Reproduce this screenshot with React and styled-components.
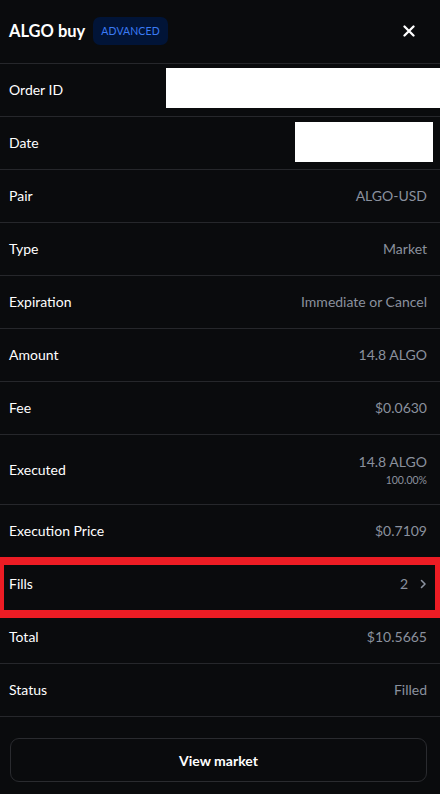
import React from "react";
import styled, { createGlobalStyle } from "styled-components";

const Global = createGlobalStyle`
  html, body { margin: 0; padding: 0; background: #0a0b0d; }
  body { font-family: Lato, "Noto Sans", sans-serif; color: #fff; }
  * { box-sizing: border-box; }
`;

const Panel = styled.div`
  width: 440px;
  height: 794px;
  background: #0a0b0d;
  display: flex;
  flex-direction: column;
  overflow: hidden;
`;

const Header = styled.div`
  height: 64px;
  display: flex;
  align-items: center;
  padding: 0 19px 1px 9px;
  border-bottom: 1px solid #26272b;
`;

const Title = styled.h1`
  margin: 0;
  font-size: 16.5px;
  font-weight: 700;
  color: #fff;
`;

const Badge = styled.span`
  margin-left: 8px;
  height: 28px;
  padding: 0 8px;
  display: inline-flex;
  align-items: center;
  border-radius: 7px;
  background: #011437;
  color: #3b7bf5;
  font-size: 10.5px;
  font-weight: 400;
  letter-spacing: 0.1px;
`;

const Close = styled.button`
  margin-left: auto;
  width: 24px;
  height: 24px;
  padding: 0;
  border: 0;
  background: transparent;
  display: flex;
  align-items: center;
  justify-content: center;
  cursor: pointer;
`;

const Row = styled.div`
  position: relative;
  height: ${(p) => (p.$tall ? 70 : 53)}px;
  flex-shrink: 0;
  display: flex;
  align-items: center;
  justify-content: space-between;
  padding: 0 13px 1px 9px;
  border-bottom: 1px solid #26272b;
`;

const Label = styled.span`
  font-size: 14px;
  color: #fff;
`;

const Value = styled.span`
  font-size: 14px;
  color: #8a919e;
  display: flex;
  align-items: center;
  gap: 12px;
`;

const Stack = styled.div`
  display: flex;
  flex-direction: column;
  align-items: flex-end;
  gap: 4px;
`;

const SubValue = styled.span`
  font-size: 10.5px;
  color: #8a919e;
`;

const Redacted = styled.div`
  position: absolute;
  background: #fff;
  top: ${(p) => p.$top}px;
  left: ${(p) => p.$left}px;
  width: ${(p) => p.$w}px;
  height: ${(p) => p.$h}px;
`;

const Highlight = styled.div`
  position: absolute;
  top: -1px;
  bottom: -8px;
  left: 0;
  right: 0;
  border-style: solid;
  border-color: #ec1c24;
  border-width: 8px 5px 8px 4px;
  pointer-events: none;
`;

const Footer = styled.div`
  padding: 21px 13px 0 10px;
`;

const Button = styled.button`
  width: 100%;
  height: 44px;
  border-radius: 9px;
  border: 1px solid #2a2b2f;
  background: #0a0b0d;
  color: #fff;
  font-family: Lato, "Noto Sans", sans-serif;
  font-size: 14px;
  font-weight: 700;
  cursor: pointer;
`;

const rows = [
  { label: "Pair", value: "ALGO-USD" },
  { label: "Type", value: "Market" },
  { label: "Expiration", value: "Immediate or Cancel" },
  { label: "Amount", value: "14.8 ALGO" },
  { label: "Fee", value: "$0.0630" },
];

const Chevron = () => (
  <svg width="7" height="10" viewBox="0 0 7 10" fill="none">
    <path d="M1.5 1.5L5 5L1.5 8.5" stroke="#8a919e" strokeWidth="1.6" strokeLinecap="round" strokeLinejoin="round" />
  </svg>
);

export default function App() {
  return (
    <Panel>
      <Global />
      <Header>
        <Title>ALGO buy</Title>
        <Badge>ADVANCED</Badge>
        <Close aria-label="Close">
          <svg width="12" height="12" viewBox="0 0 12 12">
            <path d="M1.5 1.5L10.5 10.5M10.5 1.5L1.5 10.5" stroke="#fff" strokeWidth="2.3" strokeLinecap="round" />
          </svg>
        </Close>
      </Header>
      <Row>
        <Label>Order ID</Label>
        <Redacted $top={4} $left={166} $w={274} $h={40} />
      </Row>
      <Row>
        <Label>Date</Label>
        <Redacted $top={5} $left={295} $w={138} $h={40} />
      </Row>
      {rows.map((r) => (
        <Row key={r.label}>
          <Label>{r.label}</Label>
          <Value>{r.value}</Value>
        </Row>
      ))}
      <Row $tall>
        <Label>Executed</Label>
        <Stack>
          <Value>14.8 ALGO</Value>
          <SubValue>100.00%</SubValue>
        </Stack>
      </Row>
      <Row>
        <Label>Execution Price</Label>
        <Value>$0.7109</Value>
      </Row>
      <Row>
        <Label>Fills</Label>
        <Value>
          2 <Chevron />
        </Value>
        <Highlight />
      </Row>
      <Row>
        <Label>Total</Label>
        <Value>$10.5665</Value>
      </Row>
      <Row>
        <Label>Status</Label>
        <Value>Filled</Value>
      </Row>
      <Footer>
        <Button>View market</Button>
      </Footer>
    </Panel>
  );
}
